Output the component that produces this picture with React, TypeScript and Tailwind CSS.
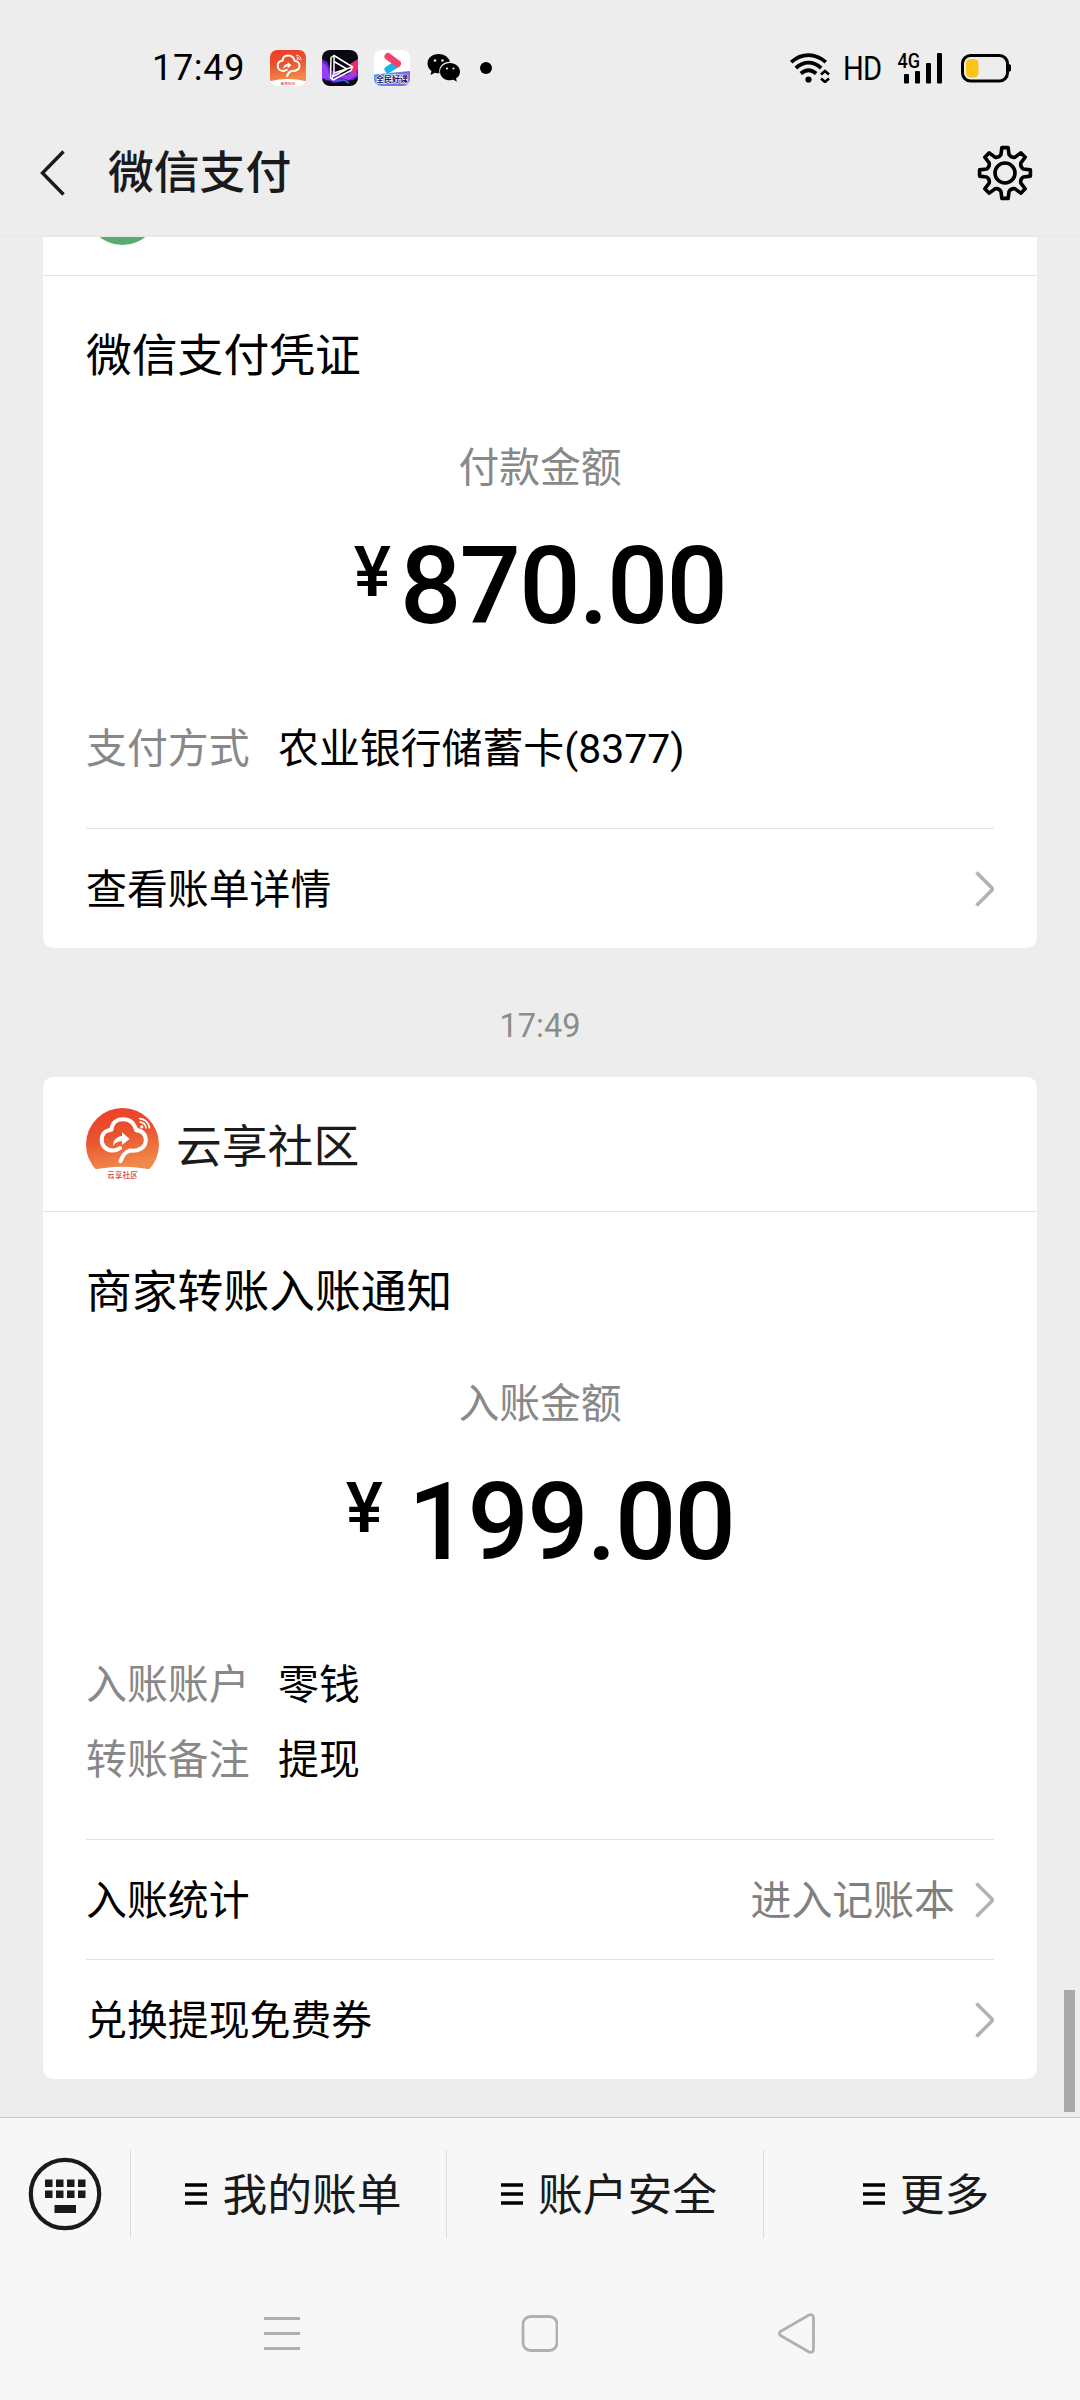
import type { ReactNode } from 'react';
import clsx from 'clsx';

const Logo = ({ className }: { className?: string }) => (
  <svg viewBox="0 0 72 72" className={className}>
    <defs>
      <linearGradient id="logoBg" x1="0" y1="0" x2="0.25" y2="1">
        <stop offset="0" stopColor="#ee3c28" />
        <stop offset="0.5" stopColor="#e9532f" />
        <stop offset="1" stopColor="#f08a4b" />
      </linearGradient>
    </defs>
    <rect width="72" height="72" fill="#fff" />
    <path d="M0 0h72v62.5Q36 53.500 0 62.500z" fill="url(#logoBg)" />
    <g fill="none" stroke="#fff" strokeWidth="4" strokeLinecap="round" strokeLinejoin="round">
      <path d="M34 52.500c2-6 4.500-9 9-10.500 9 1 16-3 16-10.500 0-5.500-4-9.500-9.500-9.700C47.500 14.500 43 11 36.500 11c-6.500 0-11 4-11.500 10.500-6 .5-9.500 4.500-9.500 10 0 6 4.500 10.500 11 10.500 3 0 5-.8 7-2.500" />
    </g>
    <path d="M35.500 24l7.500 6.500-7.500 6v-3.700c-4 0-6 1-9 4.700 .5-6 3.500-9.300 9-9.800z" fill="#fff" />
    <g fill="none" stroke="#fff" strokeWidth="1.700" strokeLinecap="round">
      <path d="M53 10.500a10 10 0 0 1 9.500 9M53.500 14a6.500 6.500 0 0 1 5.700 5.500" />
    </g>
    <circle cx="55" cy="18.500" r="1.600" fill="#fff" />
    <text x="36" y="69" textAnchor="middle" fontSize="7.600" fontWeight="500" fill="#d9443a">
      云享社区
    </text>
  </svg>
);

const VideoAppIcon = () => (
  <svg width="36" height="36" viewBox="0 0 36 36" className="rounded-[8px]">
    <rect width="36" height="36" fill="#0a0612" />
    <path d="M0 9l5 3 4 8 8 4 8 1 11-14v16l-5 3-9 1-10 2-12-5z" fill="#6a1fc9" />
    <path d="M0 12l5 4 3 12-8 1zM18 27l9-3 6-6 2 7-8 5z" fill="#9b3df5" />
    <path d="M28 14l8-5v10l-6 6z" fill="#e8306f" />
    <path d="M3 30l7-2 4 3 8-1 5 3" fill="none" stroke="#3d62e8" strokeWidth="1.500" />
    <g fill="none" stroke="#fff" strokeWidth="1.500" strokeLinejoin="round">
      <path d="M9 7.500l3-2L30.500 17 29 20.500 11 30l-2.500-2z" />
      <path d="M12 5.500V23l18.500-6M12 11.500L25 19 11 26.500M12 23l-2.500 6" />
    </g>
  </svg>
);

const CourseAppIcon = () => (
  <svg width="36" height="36" viewBox="0 0 36 36" className="rounded-[7px]">
    <defs>
      <linearGradient id="courseBg" x1="0" y1="0" x2="1" y2="0">
        <stop offset="0" stopColor="#4a9bf5" />
        <stop offset="1" stopColor="#8a62e6" />
      </linearGradient>
    </defs>
    <rect width="36" height="36" fill="#fff" />
    <path d="M14 19.500l9-5.500" stroke="#18b4ee" strokeWidth="7" strokeLinecap="round" />
    <path d="M14 6.500l9.500 7" stroke="#f2426b" strokeWidth="7" strokeLinecap="round" />
    <path d="M0 24.500L36 21v15H0z" fill="url(#courseBg)" />
    <text x="18" y="32" textAnchor="middle" fontSize="8" fontWeight="700" fill="#1d1463" stroke="#fff" strokeWidth="1.200" paintOrder="stroke">
      全民好课
    </text>
  </svg>
);

const WeChatIcon = () => (
  <svg width="34" height="30" viewBox="0 0 34 30">
    <path d="M11.500 1C5.200 1 .5 5 .5 10.500c0 3 1.500 5.700 4 7.500L3.500 22l4.300-2.200c1.500.4 3 .6 4.700.5C11 13 17 8.500 23 8.700 21.700 4 17 1 11.500 1z" />
    <path d="M23 10c-5.500 0-10 3.800-10 8.700s4.500 8.600 10 8.600c1.200 0 2.400-.2 3.500-.5l3.400 2-.9-3.200c2.400-1.600 4-4 4-6.900 0-4.900-4.500-8.700-10-8.700z" />
    <g fill="#ededed">
      <circle cx="8" cy="7.500" r="1.300" />
      <circle cx="15.500" cy="7.500" r="1.300" />
      <circle cx="20" cy="15.500" r="1.100" />
      <circle cx="26.500" cy="15.500" r="1.100" />
    </g>
  </svg>
);

const StatusBar = () => (
  <div className="flex h-[108px] items-center pt-[28px] pl-[152px] pr-[69px] text-black">
    <span className="w-[118px] text-[36px] leading-[40px] tracking-[0.7px]">17:49</span>
    <div className="flex items-center gap-[16px]">
      <Logo className="size-[36px] rounded-[7px]" />
      <VideoAppIcon />
      <CourseAppIcon />
    </div>
    <div className="ml-[17px] flex items-center gap-[19px]">
      <WeChatIcon />
      <span className="size-[12px] rounded-full bg-black" />
    </div>
    <div className="ml-auto flex items-center">
      <svg width="40" height="30" viewBox="0 0 40 30" className="mr-[11px] -translate-x-px">
        <g fill="none" stroke="#000" strokeWidth="3.800">
          <path d="M1.200 9.200C11.500-.2 25.500-.2 35.800 9.200" />
          <path d="M5.800 15c8-7 17.400-7 25.400 0" />
          <path d="M10.800 20.500c5-4.300 10.400-4.300 15.400 0" />
        </g>
        <circle cx="18.500" cy="26.500" r="3.100" />
        <path d="M31 21.500l4-3.500 4 3.500M31 25.500l4 3.500 4-3.500" fill="none" stroke="#000" strokeWidth="2.600" />
      </svg>
      <span className="ml-[1px] w-[54px] origin-left scale-x-[0.87] pt-[2px] text-[33.500px] leading-[40px] tracking-[-1px]">HD</span>
      <svg width="48" height="44" viewBox="-2 -6 48 44" className="ml-[-1px]">
        <text x="-0.500" y="15.500" fontSize="20" fontWeight="500" textLength="22.500" lengthAdjust="spacingAndGlyphs">
          4G
        </text>
        <rect x="6" y="22" width="5" height="9.500" rx="1" />
        <rect x="17" y="19" width="5" height="12.500" rx="1" />
        <rect x="28" y="11" width="5" height="20.500" rx="1" />
        <rect x="39" y="1" width="5" height="30.500" rx="1" />
      </svg>
      <svg width="50" height="30" viewBox="0 0 50 30" className="ml-[17px]">
        <rect x="1.500" y="2.500" width="45" height="25.500" rx="8" fill="none" stroke="#000" strokeWidth="3" />
        <path d="M47 11q4 0 3.500 4 .5 4-3.500 4z" />
        <rect x="5" y="6" width="12.500" height="18.500" rx="4.500" fill="#fcc419" />
      </svg>
    </div>
  </div>
);

const TEETH = 8;

// Gear outline: eight flared teeth round a ring
const gearPath = () => {
  let d = '';
  const at = (deg: number, r: number) => {
    const a = (deg * Math.PI) / 180;
    return `${(28 + r * Math.cos(a)).toFixed(2)} ${(28 + r * Math.sin(a)).toFixed(2)}`;
  };
  for (let i = 0; i < TEETH; i++) {
    const base = (i * 360) / TEETH - 90;
    d += `${i ? 'L' : 'M'}${at(base - 12.5, 18.8)}L${at(base - 7, 25.6)}L${at(base + 7, 25.6)}L${at(base + 12.5, 18.8)}`;
    d += `Q${at(base + 22.5, 16.2)} ${at(base + 32.5, 18.8)}`;
  }
  return `${d}Z`;
};

const NavHeader = () => (
  <div className="flex h-[129px] items-center pl-[40px] pr-[47px]">
    <svg width="26" height="46" viewBox="0 0 26 46" fill="none" stroke="#1a1a1a" strokeWidth="3.400">
      <path d="M23.500 1.500L2.500 23l21 21.500" />
    </svg>
    <h1 className="ml-[42px] pt-[2px] text-[45.800px] leading-[60px] font-medium text-[#1a1a1a]">微信支付</h1>
    <svg width="56" height="56" viewBox="0 0 56 56" className="ml-auto" fill="none" stroke="#000" strokeWidth="3.600" strokeLinejoin="round">
      <path d={gearPath()} />
      <circle cx="28" cy="28" r="10" />
    </svg>
  </div>
);

const Chevron = () => (
  <svg width="19" height="36" viewBox="0 0 19 36" fill="none" stroke="#b2b2b2" strokeWidth="3.600">
    <path d="M1.500 1.500l15 15q1.500 1.500 0 3l-15 15" />
  </svg>
);

const Card = ({ header, className, children }: { header: ReactNode; className?: string; children: ReactNode }) => (
  <article className={clsx('mx-[43px] rounded-[10px] bg-white', className)}>
    <div className="flex h-[135px] items-start border-b border-[#e2e2e2] px-[43px] pt-[31px]">{header}</div>
    <div className="px-[43px]">{children}</div>
  </article>
);

interface BodyProps {
  title: string;
  label: string;
  amount: string;
  spaced?: boolean;
  rows: { name: string; value: string }[];
  actions: { text: string; hint?: string }[];
}

const CardBody = ({ title, label, amount, spaced, rows, actions }: BodyProps) => (
  <>
    <h2 className="pt-[58px] text-[45.800px] leading-[46px] text-black">{title}</h2>
    <p className="mt-[67px] text-center text-[40.800px] leading-[42px] text-[#888888]">{label}</p>
    <div className="mt-[43px] flex h-[108px] items-start justify-center font-medium text-black">
      <span className="mt-[4px] text-[70px] leading-[72px]">¥</span>
      <span className={clsx('text-[108px] leading-[109px] tracking-[-1.800px]', spaced ? 'ml-[25px]' : 'ml-[9px]')}>{amount}</span>
    </div>
    <dl className="mt-[70px] mb-[43px]">
      {rows.map(({ name, value }) => (
        <div key={name} className="flex h-[75px] items-center pt-[2px] text-[40.900px] leading-[60px]">
          <dt className="w-[192px] text-[#888888]">{name}</dt>
          <dd className="text-black">{value}</dd>
        </div>
      ))}
    </dl>
    {actions.map(({ text, hint }) => (
      <div key={text} className="flex h-[120px] items-center border-t border-[#e2e2e2] text-[40.900px] leading-[60px] text-black">
        <span className="pt-[3px]">{text}</span>
        {hint && <span className="ml-auto mr-[20px] pt-[3px] text-[#808080]">{hint}</span>}
        <span className={hint ? '' : 'ml-auto'}>
          <Chevron />
        </span>
      </div>
    ))}
  </>
);

const MenuItem = ({ text, className }: { text: string; className?: string }) => (
  <div className={clsx('flex h-[88px] items-center justify-center', className)}>
    <svg width="22" height="22" viewBox="0 0 22 22">
      <path d="M0 2h22M0 11h22M0 20h22" stroke="#000" strokeWidth="3.400" />
    </svg>
    <span className="ml-[15px] pt-[4px] text-[44.800px] leading-[60px] text-[#1a1a1a]">{text}</span>
  </div>
);

const KeyboardIcon = () => (
  <svg width="74" height="74" viewBox="0 0 74 74" fill="#1a1a1a">
    <circle cx="37" cy="37" r="34.200" fill="none" stroke="#1a1a1a" strokeWidth="4.200" />
    {[17, 28, 39, 50].map((x) => (
      <g key={x}>
        <rect x={x} y="22.500" width="7.500" height="7.500" />
        <rect x={x} y="33.500" width="7.500" height="7.500" />
      </g>
    ))}
    <rect x="26.500" y="48" width="21.500" height="8" />
  </svg>
);

const App = () => (
  <div className="flex h-[2400px] w-[1080px] flex-col overflow-hidden bg-[#ededed] font-['Roboto','Noto_Sans_CJK_SC',sans-serif]">
    <header className="h-[237px] shrink-0 border-b-2 border-[#e9e9e9]">
      <StatusBar />
      <NavHeader />
    </header>

    <main className="relative h-[1880px] shrink-0 overflow-hidden">
      <Card className="mt-[-96px]" header={<span className="size-[73px] rounded-full bg-[#5aab70]" />}>
        <CardBody
          title="微信支付凭证"
          label="付款金额"
          amount="870.00"
          rows={[{ name: '支付方式', value: '农业银行储蓄卡(8377)' }]}
          actions={[{ text: '查看账单详情' }]}
        />
      </Card>

      <p className="mt-[61px] h-[68px] text-center text-[32.500px] leading-[35px] text-[#8c8c8c]">17:49</p>

      <Card
        header={
          <>
            <Logo className="size-[73px] rounded-full" />
            <span className="ml-[17px] mt-[10px] text-[45.800px] leading-[60px] text-[#1a1a1a]">云享社区</span>
          </>
        }
      >
        <CardBody
          title="商家转账入账通知"
          label="入账金额"
          amount="199.00"
          spaced
          rows={[
            { name: '入账账户', value: '零钱' },
            { name: '转账备注', value: '提现' },
          ]}
          actions={[{ text: '入账统计', hint: '进入记账本' }, { text: '兑换提现免费券' }]}
        />
      </Card>

      {/* scroll thumb */}
      <span className="absolute right-[5px] bottom-[5px] h-[122px] w-[11px] bg-[#a9a9a9]" />
    </main>

    <footer className="flex-1 border-t border-[#c8c8c8] bg-[#f7f7f7]">
      <div className="flex items-center pt-[32px]">
        <div className="flex w-[130px] justify-center">
          <KeyboardIcon />
        </div>
        <MenuItem text="我的账单" className="w-[316px] border-l border-[#dcdcdc] pl-[10px]" />
        <MenuItem text="账户安全" className="w-[317px] border-l border-[#dcdcdc] pl-[8px]" />
        <MenuItem text="更多" className="w-[317px] border-l border-[#dcdcdc] pl-[8px]" />
      </div>
      <div className="mt-[75px] flex items-center gap-[219px] pl-[263px]">
        <svg width="38" height="42" viewBox="0 0 38 42" stroke="#b0b0b0" strokeWidth="3">
          <path d="M1 5.500h36M1 20.500h36M1 35.500h36" />
        </svg>
        <svg width="38" height="42" viewBox="0 0 38 42" fill="none" stroke="#b0b0b0" strokeWidth="2.800">
          <rect x="3" y="3.500" width="34" height="34" rx="7.500" />
        </svg>
        <svg width="40" height="42" viewBox="0 0 40 42" fill="none" stroke="#b0b0b0" strokeWidth="2.800" strokeLinejoin="round">
          <path d="M3.500 18.500L32 2q4-1.500 4.500 2.500v32q-.5 4-4.500 2.500L3.500 22.500q-2.500-2 0-4z" />
        </svg>
      </div>
    </footer>
  </div>
);

export default App;
